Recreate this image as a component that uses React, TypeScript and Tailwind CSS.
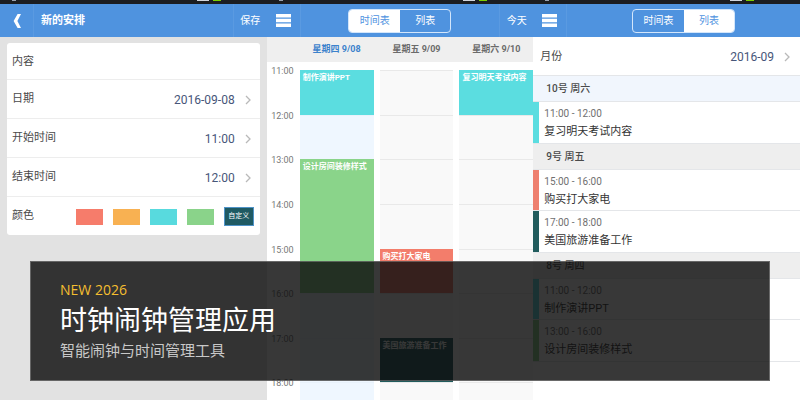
const swatches = [
  { name: "红色", color: "bg-[#f67c6b]" },
  { name: "橙色", color: "bg-[#f8b152]" },
  { name: "青色", color: "bg-[#58dade]" },
  { name: "绿色", color: "bg-[#8ad38a]" },
];

const hours = [
  { label: "11:00", row: "row-start-1" },
  { label: "12:00", row: "row-start-2" },
  { label: "13:00", row: "row-start-3" },
  { label: "14:00", row: "row-start-4" },
  { label: "15:00", row: "row-start-5" },
  { label: "16:00", row: "row-start-6" },
  { label: "17:00", row: "row-start-7" },
  { label: "18:00", row: "row-start-8" },
];

const days = [
  {
    label: "星期四 9/08",
    heading: "text-[#3c82cc]",
    column: "bg-[#eff7ff]",
    line: "border-[#e9f2fb]",
    events: [
      { title: "制作演讲PPT", style: "row-start-1 row-end-2 bg-[#5bdde0]" },
      { title: "设计房间装修样式", style: "row-start-3 row-end-6 bg-[#8ad48a]" },
    ],
  },
  {
    label: "星期五 9/09",
    heading: "text-[#6b6b6b]",
    column: "bg-[#f9f9f9]",
    line: "border-[#e9e9e9]",
    events: [
      { title: "购买打大家电", style: "row-start-5 row-end-6 bg-[#f37d6b]" },
      { title: "美国旅游准备工作", style: "row-start-7 row-end-8 bg-[#215c5d]" },
    ],
  },
  {
    label: "星期六 9/10",
    heading: "text-[#6b6b6b]",
    column: "bg-[#f9f9f9]",
    line: "border-[#e9e9e9]",
    events: [{ title: "复习明天考试内容", style: "row-start-1 row-end-2 bg-[#5bdde0]" }],
  },
];

const agenda = [
  {
    day: "10号 周六",
    heading: "bg-[#f1f6fd]",
    items: [{ time: "11:00 - 12:00", title: "复习明天考试内容", bar: "bg-[#5bdde0]" }],
  },
  {
    day: "9号 周五",
    heading: "bg-[#eeeeee]",
    items: [
      { time: "15:00 - 16:00", title: "购买打大家电", bar: "bg-[#ee806f]" },
      { time: "17:00 - 18:00", title: "美国旅游准备工作", bar: "bg-[#215c5d]" },
    ],
  },
  {
    day: "8号 周四",
    heading: "bg-[#eeeeee]",
    items: [
      { time: "11:00 - 12:00", title: "制作演讲PPT", bar: "bg-[#5bdde0]" },
      { time: "13:00 - 16:00", title: "设计房间装修样式", bar: "bg-[#8ad48a]" },
    ],
  },
];

function StatusBar() {
  return (
    <div className="flex h-1 items-start justify-between bg-[#1b1d21] pr-[46px] pl-3">
      <span className="h-px w-1 bg-gray-400" />
      <span className="flex gap-1">
        <span className="h-px w-3 bg-gray-300" />
        <span className="h-px w-2 bg-lime-500" />
      </span>
    </div>
  );
}

function Chevron() {
  return (
    <svg viewBox="0 0 6 10" className="h-[10px] w-[6px]" fill="none" stroke="#b9b9b9" strokeWidth="1.3">
      <path d="M1 1l4 4-4 4" />
    </svg>
  );
}

function MenuButton() {
  return (
    <button aria-label="菜单" className="flex h-full w-[34px] items-center justify-center border-r border-[#5a9ae1]">
      <svg viewBox="0 0 15 13" className="h-[13px] w-[15px]" fill="#fff">
        <path d="M0 0h15v3.4H0zM0 4.8h15v3.4H0zM0 9.6h15V13H0z" />
      </svg>
    </button>
  );
}

function ViewTabs({ active }: { active: "schedule" | "list" }) {
  const on = "flex-1 bg-white text-[#4f93df]";
  const off = "flex-1 text-white";
  return (
    <div className="flex h-6 w-[103px] overflow-hidden rounded border border-[#d3e6fb] text-[10px]">
      <button className={active === "schedule" ? on : off}>时间表</button>
      <button className={active === "list" ? on : off}>列表</button>
    </div>
  );
}

function PickerRow({ label, value }: { label: string; value: string }) {
  return (
    <button className="flex h-[39px] w-full items-center border-t border-[#ededed] pt-px pr-[9px] pl-[5px]">
      <span className="text-[11px] text-[#4a4a4a]">{label}</span>
      <span className="mr-[10px] ml-auto text-[12px] text-[#475679]">{value}</span>
      <Chevron />
    </button>
  );
}

function NewEventPanel() {
  return (
    <section className="bg-[#e2e2e2]">
      <StatusBar />
      <header className="flex h-[33px] items-center bg-[#4f93df] text-white">
        <button aria-label="返回" className="flex h-full w-[34px] items-center justify-center border-r border-[#5a9ae1]">
          <svg viewBox="0 0 8 14" className="h-[14px] w-[8px]" fill="#fff">
            <path d="M4.600 0H8L4.400 7 8 14H4.600L0.600 7z" />
          </svg>
        </button>
        <h2 className="ml-[7px] pt-[2px] text-[11px] font-bold">新的安排</h2>
        <button className="ml-auto h-full w-[34px] border-l border-[#5a9ae1] text-[10px]">保存</button>
      </header>
      <form className="mx-[7px] mt-[6px] rounded-[3px] bg-white">
        <div className="flex h-9 items-center px-[5px] pt-[2px] text-[11px] text-[#4a4a4a]">
          <label htmlFor="content">内容</label>
          <input id="content" className="ml-4 min-w-0 flex-1 outline-none" />
        </div>
        <PickerRow label="日期" value="2016-09-08" />
        <PickerRow label="开始时间" value="11:00" />
        <PickerRow label="结束时间" value="12:00" />
        <div className="flex h-[39px] items-center border-t border-[#ededed] pt-px pr-[6px] pl-[5px]">
          <span className="mr-auto text-[11px] text-[#4a4a4a]">颜色</span>
          <div className="flex items-center gap-[10px]">
            {swatches.map((swatch) => (
              <button key={swatch.name} type="button" aria-label={swatch.name} className={`h-4 w-[27px] ${swatch.color}`} />
            ))}
            <button type="button" className="h-[19px] w-[30px] border border-[#4f93c8] bg-[#1f5a63] text-[7px] text-white">
              自定义
            </button>
          </div>
        </div>
      </form>
    </section>
  );
}

function SchedulePanel() {
  return (
    <section className="bg-white">
      <StatusBar />
      <header className="flex h-[33px] items-center justify-between bg-[#4f93df] text-white">
        <MenuButton />
        <ViewTabs active="schedule" />
        <button className="h-full w-[34px] border-l border-[#5a9ae1] text-[10px]">今天</button>
      </header>
      <div className="grid h-[25px] grid-cols-[27px_1fr_1fr_1fr] items-center gap-x-[6px] bg-[#efefef] pt-px text-center text-[9px] font-bold">
        <span />
        {days.map((day) => (
          <span key={day.label} className={day.heading}>{day.label}</span>
        ))}
      </div>
      <div className="mt-2 grid h-[357px] grid-cols-[27px_1fr_1fr_1fr] gap-x-[6px]">
        <div className="grid grid-rows-8 text-right text-[9px] leading-3 text-[#777777]">
          {hours.map((hour) => (
            <span key={hour.label} className="-mt-[5px]">{hour.label}</span>
          ))}
        </div>
        {days.map((day) => (
          <div key={day.label} className={`grid grid-cols-1 grid-rows-8 ${day.column}`}>
            {hours.map((hour) => (
              <div key={hour.label} className={`col-start-1 border-t ${hour.row} ${day.line}`} />
            ))}
            {day.events.map((event) => (
              <div
                key={event.title}
                className={`col-start-1 overflow-hidden px-[3px] pt-[2px] text-[8px] leading-3 font-bold whitespace-nowrap text-white ${event.style}`}
              >
                {event.title}
              </div>
            ))}
          </div>
        ))}
      </div>
    </section>
  );
}

function AgendaPanel() {
  return (
    <section className="bg-white">
      <StatusBar />
      <header className="flex h-[33px] items-center bg-[#4f93df] text-white">
        <MenuButton />
        <div className="flex flex-1 justify-center">
          <ViewTabs active="list" />
        </div>
      </header>
      <button className="flex h-[38px] w-full items-center pt-[2px] pr-[10px] pl-[7px]">
        <span className="text-[11px] text-[#4a4a4a]">月份</span>
        <span className="mr-[10px] ml-auto text-[12px] text-[#475679]">2016-09</span>
        <Chevron />
      </button>
      <div className="border-b border-[#e4e6e9]">
        {agenda.map((group) => (
          <div key={group.day}>
            <h3 className={`flex h-[27px] items-center border-y border-[#e4e6e9] pl-[13px] text-[10px] font-medium text-[#4a4a4a] ${group.heading}`}>
              {group.day}
            </h3>
            <ul className="divide-y divide-[#e4e6e9]">
              {group.items.map((item) => (
                <li key={item.title} className="flex h-[41px]">
                  <span className={`w-[6px] ${item.bar}`} />
                  <div className="pt-1 pl-[5px]">
                    <div className="text-[10px] leading-4 text-[#707070]">{item.time}</div>
                    <div className="text-[11px] leading-5 text-[#333333]">{item.title}</div>
                  </div>
                </li>
              ))}
            </ul>
          </div>
        ))}
      </div>
    </section>
  );
}

export default function App() {
  return (
    <main className="relative h-screen overflow-hidden font-[Roboto,'Noto_Sans_CJK_SC',sans-serif]">
      <div className="grid h-full grid-cols-3">
        <NewEventPanel />
        <SchedulePanel />
        <AgendaPanel />
      </div>
      <div className="absolute inset-x-[30px] bottom-[19px] border border-white/25 bg-[#0c0c0c]/82 px-[29px] pt-[18px] pb-5 font-['Open_Sans','Noto_Sans_CJK_SC',sans-serif]">
        <p className="text-[14px] leading-5 text-[#f5bf30]">NEW 2026</p>
        <h1 className="text-[27px] leading-10 text-white">时钟闹钟管理应用</h1>
        <p className="text-[15px] leading-5 text-[#c8c8c8]">智能闹钟与时间管理工具</p>
      </div>
    </main>
  );
}
